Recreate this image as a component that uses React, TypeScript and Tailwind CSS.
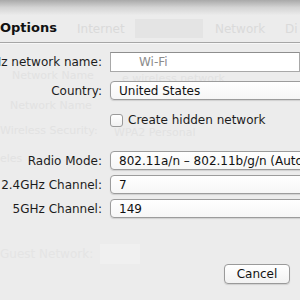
import { ReactNode } from 'react';

const font = { fontFamily: '"Lucida Grande", "DejaVu Sans", sans-serif' };

function Label({ children }: { children: ReactNode }) {
  return (
    <div className="flex w-[102px] shrink-0 justify-end whitespace-nowrap text-[12px] text-[#1c1c1c]">
      {children}
    </div>
  );
}

function Popup({ value }: { value: string }) {
  return (
    <div className="flex h-[19px] w-[210px] shrink-0 items-center overflow-hidden whitespace-nowrap rounded-[4px] border border-[#9c9c9c] bg-gradient-to-b from-white to-[#f6f6f6] pl-[8px] text-[12px] text-[#111] shadow-[0_1px_1px_rgba(0,0,0,0.12)]">
      {value}
    </div>
  );
}

function Faint({ className, children }: { className: string; children: ReactNode }) {
  return (
    <div className={`absolute whitespace-nowrap leading-none text-[11px] text-[#e2e2e2] ${className}`}>{children}</div>
  );
}

export default function App() {
  return (
    <div className="relative h-[300px] w-[300px] overflow-hidden bg-[#ececec]" style={font}>
      {/* what shows through from the window behind */}
      <Faint className="left-[12px] top-[70px]">Network Name</Faint>
      <Faint className="left-[122px] top-[73px] text-[8px]">e wireless network</Faint>
      <Faint className="left-[10px] top-[100px]">Network Name</Faint>
      <Faint className="left-[0px] top-[125px]">Wireless Security:</Faint>
      <Faint className="left-[114px] top-[127px]">WPA2 Personal</Faint>
      <Faint className="left-[0px] top-[153px]">eles</Faint>
      <Faint className="left-[0px] top-[248px] text-[12px] text-[#e4e4e4]">Guest Network:</Faint>
      <div className="absolute left-[100px] top-[244px] h-[20px] w-[40px] bg-[#f0f0f0]" />

      <div className="relative flex flex-col">
        <div className="h-[15px] bg-gradient-to-b from-[#a9a9a9] via-[#d4d4d4] to-[#ebebeb]" />
        <div className="flex h-[27px] items-center text-[12px]">
          <div className="w-[68px] pb-[2px] text-[13px] font-bold text-[#111]">Options</div>
          <div className="ml-[9px] w-[58px] text-[#dadada]">Internet</div>
          <div className="h-[19px] w-[68px] bg-[#e4e4e4]" />
          <div className="ml-[12px] w-[70px] text-[#dadada]">Network</div>
          <div className="text-[#dadada]">Di</div>
        </div>
        <div className="h-px bg-[#a6a6a6]" />
        <div className="h-px bg-[#f7f7f7]" />

        <div className="mt-[8px] flex items-center gap-[8px]">
          <Label>5GHz network name:</Label>
          <div className="flex h-[20px] w-[190px] items-center border border-[#a8a8a8] border-t-[#8e8e8e] bg-white pl-[28px] text-[12px] text-[#8c8c8c]">
            Wi-Fi
          </div>
        </div>

        <div className="mt-[9px] flex items-center gap-[8px]">
          <Label>Country:</Label>
          <Popup value="United States" />
        </div>

        <div className="mt-[11px] flex items-center gap-[5px] pl-[110px]">
          <div className="h-[13px] w-[13px] rounded-[3px] border border-[#9a9a9a] bg-gradient-to-b from-white to-[#f1f1f1]" />
          <div className="text-[12px] text-[#1c1c1c]">Create hidden network</div>
        </div>

        <div className="mt-[22px] flex items-center gap-[8px]">
          <Label>Radio Mode:</Label>
          <Popup value="802.11a/n – 802.11b/g/n (Automatic)" />
        </div>

        <div className="mt-[5px] flex items-center gap-[8px]">
          <Label>2.4GHz Channel:</Label>
          <Popup value="7" />
        </div>

        <div className="mt-[5px] flex items-center gap-[8px]">
          <Label>5GHz Channel:</Label>
          <Popup value="149" />
        </div>

        <div className="mt-[46px] flex justify-end pr-[10px]">
          <button className="h-[20px] w-[66px] rounded-[4px] border border-[#9a9a9a] bg-gradient-to-b from-white to-[#f2f2f2] text-[12px] text-[#111] shadow-[0_1px_1px_rgba(0,0,0,0.12)]">
            Cancel
          </button>
        </div>
      </div>
    </div>
  );
}
